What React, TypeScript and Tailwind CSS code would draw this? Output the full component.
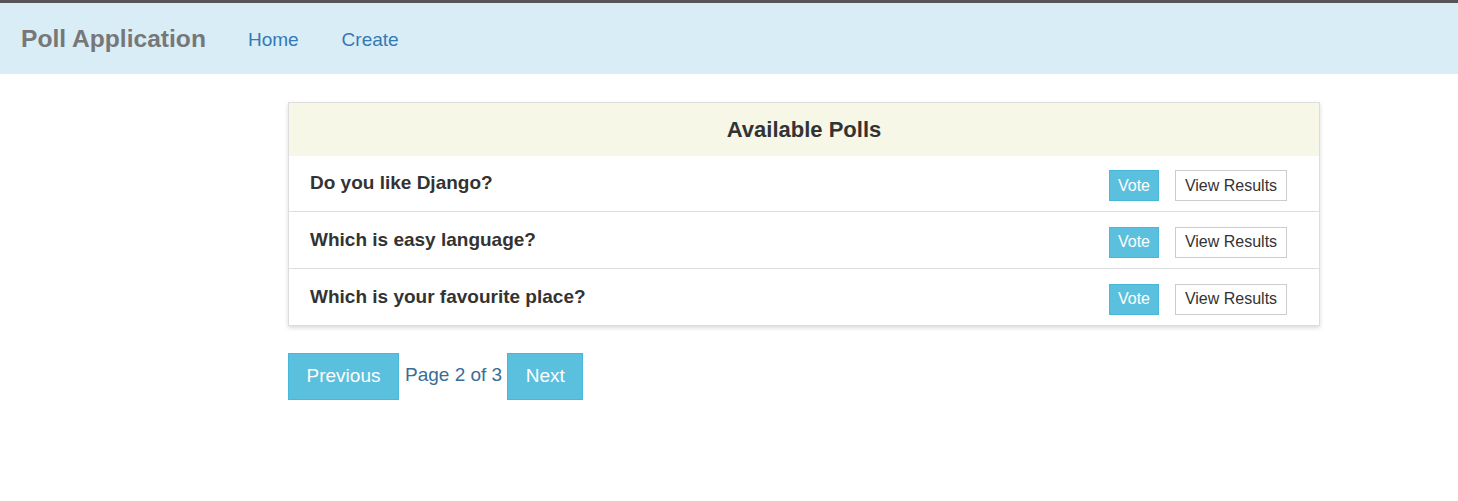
import React from 'react';

const polls = [
  'Do you like Django?',
  'Which is easy language?',
  'Which is your favourite place?',
];

export default function App() {
  return (
    <div className="min-h-screen bg-white font-['Liberation_Sans',Arial,sans-serif] text-[#333]">
      {/* Navbar */}
      <nav className="h-[74px] border-t-[3px] border-[#555] bg-[#d9edf7] flex items-center pl-[21px] pt-[2px]">
        <span className="text-[24.6px] font-bold text-[#777] leading-none">Poll Application</span>
        <div className="flex items-center ml-[42px] gap-[43px] text-[19px] text-[#337ab7] leading-none">
          <a href="#">Home</a>
          <a href="#">Create</a>
        </div>
      </nav>

      <main className="ml-[288px] w-[1032px] pt-[28px]">
        {/* Polls card */}
        <div className="border border-[#ddd] shadow-[0_2px_4px_rgba(0,0,0,0.15)]">
          <div className="h-[53px] bg-[#f6f7e6] flex items-center justify-center">
            <h3 className="text-[22px] font-bold text-[#333]">Available Polls</h3>
          </div>
          {polls.map((q, i) => (
            <div
              key={i}
              className={`flex items-center pl-[21px] pr-[32px] ${i > 0 ? 'border-t border-[#ddd] h-[57px]' : 'h-[55px]'}`}
            >
              <span className="flex-1 text-[19px] font-bold text-[#333]">{q}</span>
              <div className="flex items-center mt-[4px]">
                <button className="h-[31px] w-[50px] bg-[#5bc0de] border border-[#46b8da] text-white text-[16px]">Vote</button>
                <button className="h-[31px] w-[112px] ml-4 bg-white border border-[#ccc] text-[#333] text-[16px]">View Results</button>
              </div>
            </div>
          ))}
        </div>

        {/* Pagination */}
        <div className="mt-[27px] flex items-center">
          <button className="h-[47px] w-[111px] bg-[#5bc0de] border border-[#46b8da] text-white text-[19px]">Previous</button>
          <span className="ml-[6px] mr-[5px] -mt-[3px] text-[19px] text-[#3a6d96]">Page 2 of 3</span>
          <button className="h-[47px] w-[76px] bg-[#5bc0de] border border-[#46b8da] text-white text-[19px]">Next</button>
        </div>
      </main>
    </div>
  );
}
